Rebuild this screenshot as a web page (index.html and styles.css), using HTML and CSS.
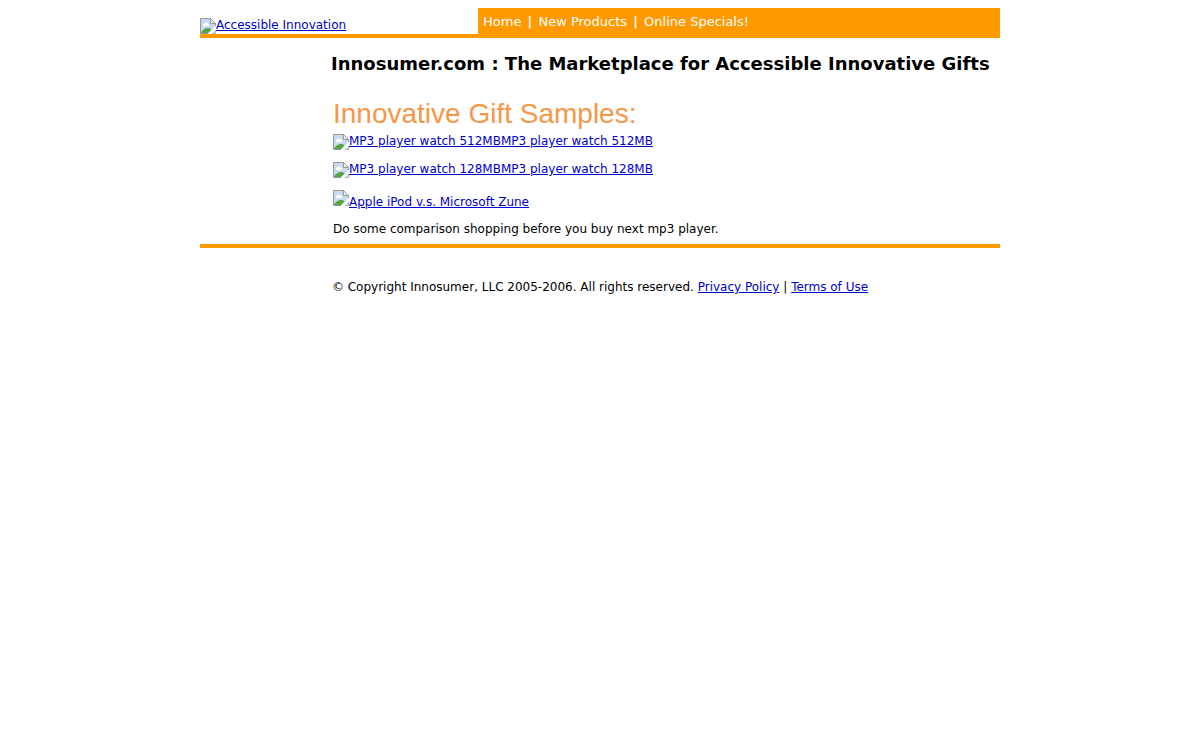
FILE: index.html
```
<!DOCTYPE html>
<html lang="en">
<head>
<meta charset="utf-8">
<meta name="viewport" content="width=device-width, initial-scale=1.0">
<title>Innosumer.com : The Marketplace for Accessible Innovative Gifts</title>
<link rel="stylesheet" href="styles.css">
</head>
<body>
  <!-- shared thumbnail icon -->
  <svg class="defs" width="0" height="0" aria-hidden="true">
    <symbol id="thumb" viewBox="0 0 16 16">
      <path d="M0.5 0.5H10.5L15.5 5.5V15.5H0.5Z" fill="#c9d9f2"/>
      <path d="M3 7.5C2.5 5.5 4 5 5 5.5C6 4 8 4.5 8 6C9.5 6 9.5 8 8 8H3.5Z" fill="#fff"/>
      <path d="M1 15.5V14.5C3 11.5 5.5 10 8 10C9.500 10 10.500 10.500 11.500 11.500L8 15.500Z" fill="#55a640"/>
      <path d="M0.5 15.5V0.5H10.5L15.5 5.5V8" fill="none" stroke="#989898"/>
      <path d="M10.500 0.500V5.500H15.500Z" fill="#f2f2f2" stroke="#989898"/>
      <path d="M0.500 15.500H8" stroke="#989898"/>
      <path d="M16 7.500L7.500 16H11.500L16 11.500Z" fill="#fff"/>
      <path d="M12 15.500H15.500V12" fill="none" stroke="#a8b4c4"/>
    </symbol>
  </svg>

  <div class="page">
    <header class="header">
      <a class="logo" href="#"><svg class="thumb"><use href="#thumb"/></svg>Accessible Innovation</a>
      <nav class="nav">
        <a href="#">Home</a> <b>|</b> <a href="#">New Products</a> <b>|</b> <a href="#">Online Specials!</a>
      </nav>
    </header>

    <main class="content">
      <h1>Innosumer.com : The Marketplace for Accessible Innovative Gifts</h1>
      <h2>Innovative Gift Samples:</h2>
      <p><a href="#"><svg class="thumb"><use href="#thumb"/></svg>MP3 player watch 512MBMP3 player watch 512MB</a></p>
      <p><a href="#"><svg class="thumb"><use href="#thumb"/></svg>MP3 player watch 128MBMP3 player watch 128MB</a></p>
      <p><a href="#"><svg class="thumb raised"><use href="#thumb"/></svg>Apple iPod v.s. Microsoft Zune</a></p>
      <p>Do some comparison shopping before you buy next mp3 player.</p>
    </main>

    <footer class="footer">
      &copy; Copyright Innosumer, LLC 2005-2006. All rights reserved. <a href="#">Privacy Policy</a> | <a href="#">Terms of Use</a>
    </footer>
  </div>
</body>
</html>
```
FILE: styles.css
```
body {
  margin: 8px;
  background: #fff;
  color: #000;
  font-family: Verdana, "DejaVu Sans", sans-serif;
  font-size: 12px;
  line-height: 15px;
}
a {
  color: #0000cc;
}
.defs {
  display: block;
}
.page {
  max-width: 800px;
  margin: 0 auto;
}
.header {
  display: flex;
  align-items: stretch;
  border-bottom: 4px solid #ff9900;
}
.logo {
  width: 278px;
  padding-top: 10px;
}
.thumb {
  width: 16px;
  height: 16px;
  vertical-align: top;
}
.raised {
  vertical-align: baseline;
}
.nav {
  flex: 1;
  padding: 6px 5px 4px;
  background: #ff9900;
  color: #fff;
  font-size: 13px;
  line-height: 16px;
}
.nav a {
  color: #fff;
  text-decoration: none;
}
.nav b {
  margin: 0 2px;
}
.content {
  padding: 16px 0 7px 133px;
  border-bottom: 4px solid #ff9900;
}
h1 {
  margin: 0 0 24px -2px;
  font-size: 18px;
  line-height: 20px;
}
h2 {
  margin: 0 0 4px;
  color: #f79646;
  font-family: Arial, "Liberation Sans", sans-serif;
  font-size: 28px;
  font-weight: normal;
  line-height: 32px;
}
p {
  margin: 0 0 12px;
}
p:last-child {
  margin: 0;
}
.footer {
  padding-top: 32px;
  text-align: center;
}
```
